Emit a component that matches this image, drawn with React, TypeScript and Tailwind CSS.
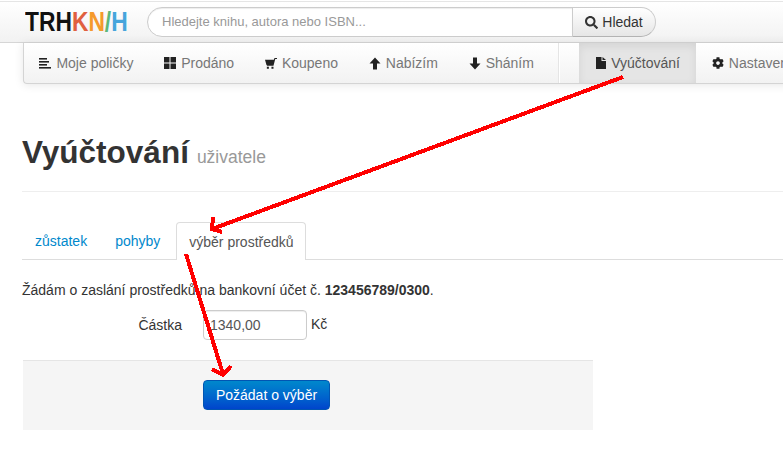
import { FaCog, FaSearch } from "react-icons/fa";
import type { ReactNode } from "react";

const AlignIcon = () => (
  <svg width="12" height="12" viewBox="0 0 12 12" fill="currentColor">
    <rect x="0" y="1" width="8" height="1.6" />
    <rect x="0" y="4" width="10" height="1.6" />
    <rect x="0" y="7" width="8" height="1.6" />
    <rect x="0" y="10" width="12" height="1.6" />
  </svg>
);

const GridIcon = () => (
  <svg width="12" height="12" viewBox="0 0 12 12" fill="currentColor">
    <rect x="0" y="0" width="5.5" height="5.5" />
    <rect x="6.5" y="0" width="5.5" height="5.5" />
    <rect x="0" y="6.5" width="5.5" height="5.5" />
    <rect x="6.5" y="6.5" width="5.5" height="5.5" />
  </svg>
);

const CartIcon = () => (
  <svg width="13" height="13" viewBox="0 0 13 13" fill="currentColor">
    <path d="M0 2.5 H9.6 L10.3 0.5 H13 V1.6 H11.1 L9.2 9 H2 V8 H1.6 Z" />
    <rect x="2" y="10" width="2.2" height="2.2" />
    <rect x="7" y="10" width="2.2" height="2.2" />
  </svg>
);

const UpIcon = () => (
  <svg width="12" height="13" viewBox="0 0 12 13" fill="currentColor">
    <path d="M6 0.5 L11.5 6.5 H8 V12.5 H4 V6.5 H0.5 Z" />
  </svg>
);

const DownIcon = () => (
  <svg width="12" height="13" viewBox="0 0 12 13" fill="currentColor">
    <path d="M6 12.5 L11.5 6.5 H8 V0.5 H4 V6.5 H0.5 Z" />
  </svg>
);

const FileIcon = () => (
  <svg width="10" height="12" viewBox="0 0 10 12" fill="currentColor">
    <path d="M0 0 H5.5 V4 H10 V12 H0 Z" />
    <path d="M6.5 0 L10 3 H6.5 Z" />
  </svg>
);

const NavItem = ({ icon, label, active }: { icon: ReactNode; label: string; active?: boolean }) => {
  return (
    <div
      className={
        active
          ? "flex items-center gap-[4px] px-[16.5px] h-[40px] bg-[#e5e5e5] text-[#555] shadow-[inset_0_3px_8px_rgba(0,0,0,0.08)] shrink-0"
          : "flex items-center gap-[5px] px-[15.4px] h-[40px] text-[#777] shrink-0"
      }
    >
      <span className="w-[12px] flex justify-center text-[#222]">{icon}</span>
      <span>{label}</span>
    </div>
  );
};

const Arrows = () => {
  return (
    <svg className="absolute left-0 top-0 pointer-events-none" width="783" height="457" fill="none" stroke="#ff0000" strokeWidth="4" shapeRendering="crispEdges">
      <path d="M623 77 L212 229" />
      <path d="M213 217 L212 229 L222 232" />
      <path d="M186 254 L223 374" />
      <path d="M212 369 L223 375 L231 366" />
    </svg>
  );
};

export default function App() {
  return (
    <div className="relative w-[783px] h-[457px] overflow-hidden bg-white font-['Liberation_Sans',sans-serif] text-[14px] text-[#333]">
      <header className="h-[42px] mt-[1px] flex items-center border-y border-[#d6d6d6] border-t-[#e5e5e5] bg-gradient-to-b from-white to-[#f2f2f2]">
        <div className="ml-[25px] w-[122px] shrink-0">
          <div className="flex w-max origin-left scale-x-[0.845] text-[27px] leading-none font-bold">
            <span className="text-[#111]">TRH</span>
            <span className="text-[#e0603f]">K</span>
            <span className="text-[#f59a2c]">N</span>
            <span className="text-[#5cb878]">/</span>
            <span className="text-[#46a5dc]">H</span>
          </div>
        </div>
        <div className="flex h-[30px]">
          <div className="w-[426px] bg-white border border-[#ccc] rounded-l-[15px] pl-[14px] flex items-center text-[13px] text-[#999] shadow-[inset_0_1px_1px_rgba(0,0,0,0.075)]">
            Hledejte knihu, autora nebo ISBN...
          </div>
          <div className="w-[84px] -ml-[1px] flex items-center justify-center gap-[4px] border border-[#ccc] border-b-[#b3b3b3] rounded-r-[15px] bg-gradient-to-b from-white to-[#e6e6e6] text-[#333]">
            <FaSearch className="w-[13px] h-[13px]" />
            <span>Hledat</span>
          </div>
        </div>
      </header>
      <nav className="ml-[23px] h-[41px] flex items-center border-l border-b border-[#d4d4d4] rounded-bl-[4px] bg-gradient-to-b from-white to-[#f2f2f2] shadow-[0_1px_10px_rgba(0,0,0,0.1)] w-[800px]">
        <NavItem icon={<AlignIcon />} label="Moje poličky" />
        <NavItem icon={<GridIcon />} label="Prodáno" />
        <NavItem icon={<CartIcon />} label="Koupeno" />
        <NavItem icon={<UpIcon />} label="Nabízím" />
        <NavItem icon={<DownIcon />} label="Sháním" />
        <div className="ml-[9px] mr-[18.4px] w-[2px] h-[40px] border-l border-[#e5e5e5] bg-white shrink-0" />
        <NavItem icon={<FileIcon />} label="Vyúčtování" active />
        <NavItem icon={<FaCog className="w-[12px] h-[12px]" />} label="Nastavení" />
      </nav>
      <main className="ml-[22px]">
        <div className="mt-[48px] pb-[9px] border-b border-[#eee] h-[60px] flex items-baseline gap-[8px]">
          <h1 className="text-[31.5px] leading-[40px] font-bold text-[#333]">Vyúčtování</h1>
          <span className="text-[17.5px] text-[#999]">uživatele</span>
        </div>
        <div className="mt-[30px] flex h-[38px] border-b border-[#ddd] pl-[1px]">
          <div className="px-[12px] pt-[9px] text-[#0088cc]">zůstatek</div>
          <div className="ml-[2px] px-[14px] pt-[9px] text-[#0088cc]">pohyby</div>
          <div className="ml-[2px] pl-[12px] pr-[11.5px] pt-[9px] h-[38px] bg-white border border-b-0 border-[#ddd] rounded-t-[4px] text-[#555]">výběr prostředků</div>
        </div>
        <p className="mt-[20px] leading-[20px]">
          Žádám o zaslání prostředků na bankovní účet č. <strong>123456789/0300</strong>.
        </p>
        <div className="mt-[10px] flex items-start">
          <label className="w-[160px] text-right leading-[30px]">Částka</label>
          <div className="ml-[21px] w-[104px] h-[30px] border border-[#ccc] rounded-[4px] pl-[6px] leading-[28px] text-[#555] shadow-[inset_0_1px_1px_rgba(0,0,0,0.075)]">1340,00</div>
          <span className="ml-[4px] leading-[28px]">Kč</span>
        </div>
        <div className="mt-[20px] ml-[1px] w-[570px] h-[70px] bg-[#f5f5f5] border-t border-[#e5e5e5] pl-[180px] pt-[19px]">
          <div className="w-[127px] h-[30px] flex items-center justify-center rounded-[4px] border border-[#0055b3] bg-gradient-to-b from-[#0088cc] to-[#0044cc] text-white">
            Požádat o výběr
          </div>
        </div>
      </main>
      <Arrows />
    </div>
  );
}
